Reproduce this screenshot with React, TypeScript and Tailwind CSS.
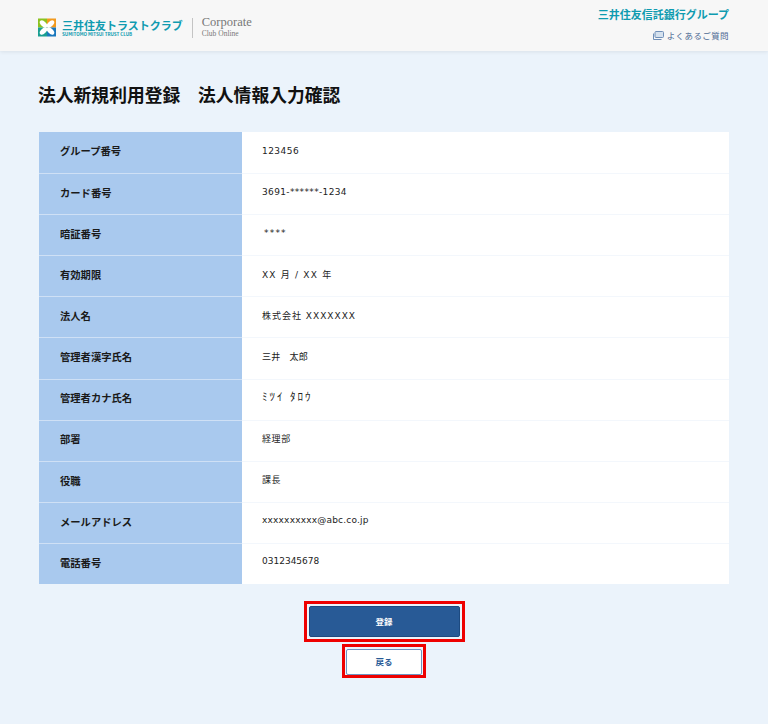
import React from "react";

const rows = [
  { label: "グループ番号", value: "123456", cls: "pb-[2px] tracking-[0.45px] text-[#000000]" },
  { label: "カード番号", value: "3691-******-1234", cls: "pb-[2px] tracking-[0.35px]" },
  { label: "暗証番号", value: "****", cls: "pb-[2px] ml-[2px] tracking-[1.200px]" },
  { label: "有効期限", value: "XX 月 / XX 年", cls: "pb-[2px] tracking-[1.200px]" },
  { label: "法人名", value: "株式会社 XXXXXXX", cls: "pb-[2px] tracking-[1px]" },
  { label: "管理者漢字氏名", value: "三井　太郎", cls: "pb-[2px] tracking-[0.2px]" },
  { label: "管理者カナ氏名", value: "ﾐﾂｲ ﾀﾛｳ", cls: "pb-[2px] tracking-[2px] text-[11px]" },
  { label: "部署", value: "経理部", cls: "pb-[2px] tracking-[0.6px]" },
  { label: "役職", value: "課長", cls: "pb-[2px] tracking-[0.6px]" },
  { label: "メールアドレス", value: "xxxxxxxxxx@abc.co.jp", cls: "pb-[5px] tracking-[0.2px]" },
  { label: "電話番号", value: "0312345678", cls: "pb-[4px] tracking-[0px]" },
];

const Logo = () => (
  <svg width="18" height="19" viewBox="0 0 18 18" className="shrink-0 -ml-px">
    <rect x="0" y="0" width="9" height="9" fill="#8cc21f" />
    <rect x="9" y="0" width="9" height="9" fill="#f29a1f" />
    <rect x="0" y="9" width="9" height="9" fill="#1a9f92" />
    <rect x="9" y="9" width="9" height="9" fill="#1a78bd" />
    <g fill="#ffffff">
      <ellipse cx="5.500" cy="5.500" rx="4.500" ry="2.600" transform="rotate(45 5.500 5.500)" />
      <ellipse cx="12.500" cy="5.500" rx="4.500" ry="2.600" transform="rotate(-45 12.500 5.500)" />
      <ellipse cx="5.500" cy="12.500" rx="4.500" ry="2.600" transform="rotate(-45 5.500 12.500)" />
      <ellipse cx="12.500" cy="12.500" rx="4.500" ry="2.600" transform="rotate(45 12.500 12.500)" />
    </g>
  </svg>
);

export default function App() {
  return (
    <div className="min-h-[724px] bg-[#ebf3fb] font-['Noto_Sans_CJK_JP','Liberation_Sans',sans-serif]">
      <header className="h-[51px] bg-[#f7f7f7] shadow-[0_1px_4px_rgba(0,0,0,0.08)] px-[39px] flex items-start justify-between">
        <div className="flex items-center mt-[16px]">
          <Logo />
          <div className="ml-[6px] flex flex-col gap-[1px]">
            <span className="text-[11px] leading-[12px] font-bold text-[#0f9bb0] whitespace-nowrap">三井住友トラストクラブ</span>
            <span className="text-[4.500px] leading-[5px] font-bold text-[#0f9bb0] whitespace-nowrap">SUMITOMO MITSUI TRUST CLUB</span>
          </div>
          <div className="ml-[9px] h-[20px] w-px bg-[#c4c4c4]" />
          <div className="ml-[9px] flex flex-col font-['Liberation_Serif',serif] text-[#777777]">
            <span className="text-[12.500px] leading-[13px]">Corporate</span>
            <span className="text-[7.500px] leading-[10px]">Club Online</span>
          </div>
        </div>
        <div className="flex flex-col items-end mt-[7px]">
          <span className="text-[11px] leading-[14px] font-bold text-[#0f9bb0] whitespace-nowrap">三井住友信託銀行グループ</span>
          <div className="mt-[8px] flex items-center gap-[3px] text-[#4d6a94]">
            <svg width="11" height="9" viewBox="0 0 11 9" fill="#d5e1ee" stroke="#6f8fb8" strokeWidth="1">
              <path d="M0.500 2.500v6h8" fill="none" />
              <rect x="2" y="0.500" width="8.500" height="6" rx="1" />
            </svg>
            <span className="text-[8.500px] leading-[12px] tracking-[0.4px] whitespace-nowrap">よくあるご質問</span>
          </div>
        </div>
      </header>

      <main className="px-[39px]">
        <h1 className="mt-[30px] -ml-px text-[17.800px] leading-[26px] font-bold text-[#111111] whitespace-pre">法人新規利用登録　法人情報入力確認</h1>

        <div className="mt-[25px] bg-white">
          {rows.map((row, i) => (
            <div key={row.label} className={`flex h-[41.100px] ${i > 0 ? "border-t border-[#f3f7fc]" : ""}`}>
              <div className={`w-[203px] shrink-0 bg-[#a9c9ee] pl-[21px] pb-[3px] flex items-center text-[10.300px] font-bold text-[#1a1a1a] ${i > 0 ? "border-t border-[#cfe0f5] -mt-px" : ""}`}>
                {row.label}
              </div>
              <div className={`pl-[20px] flex items-center text-[9px] text-[#222222] font-['DejaVu_Sans','Noto_Sans_CJK_JP',sans-serif] whitespace-pre ${row.cls}`}>
                {row.value}
              </div>
            </div>
          ))}
        </div>

        <div className="mt-[17px] flex flex-col items-center gap-[2px]">
          <div className="w-[161px] h-[41px] border-[3px] border-[#ee0000] p-[2px]">
            <button className="block w-full h-full rounded-[2px] bg-[#285a96] border border-[#1d4a80] text-white text-[8.500px] font-bold">登録</button>
          </div>
          <div className="w-[84px] h-[34px] border-[3px] border-[#ee0000] px-[1px] pt-[2px]">
            <button className="block w-full h-full rounded-[2px] bg-white border border-[#6f93c0] pb-[1px] text-[#285a96] text-[8.500px] font-bold">戻る</button>
          </div>
        </div>
      </main>
    </div>
  );
}
